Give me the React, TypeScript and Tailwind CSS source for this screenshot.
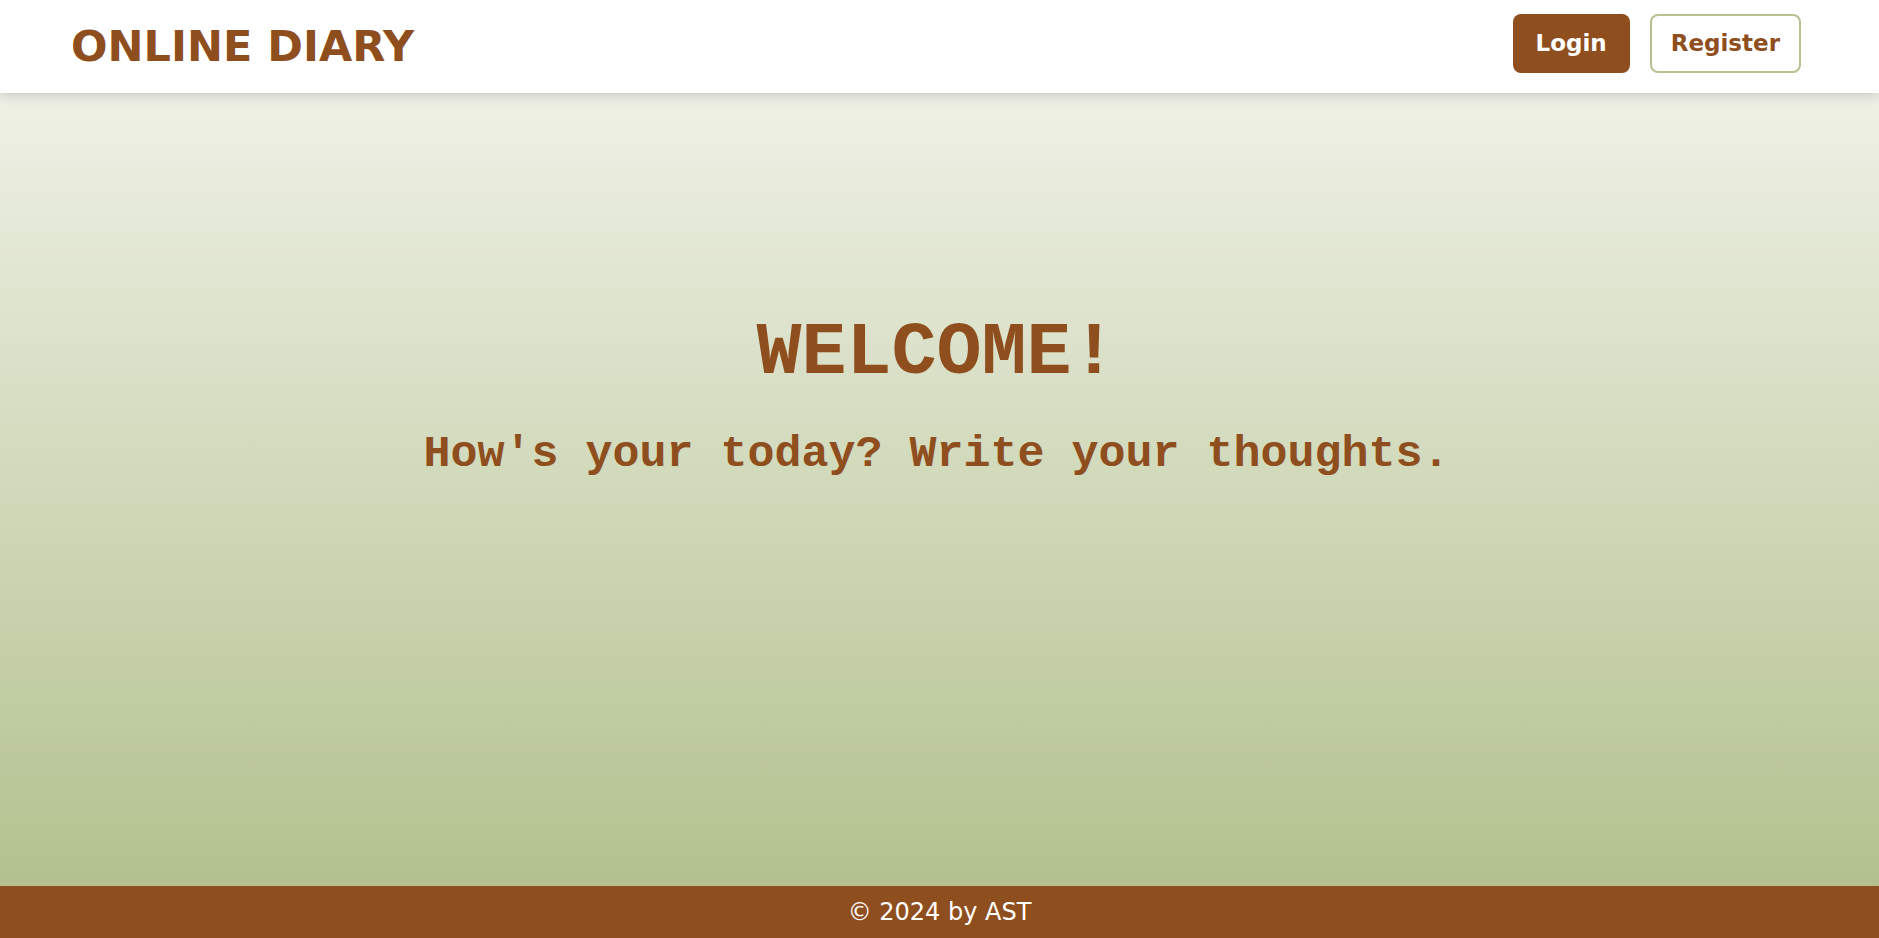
import React from "react";

export default function App() {
  return (
    <div className="flex h-[938px] flex-col overflow-hidden">
      <header className="relative z-10 flex h-[93px] shrink-0 justify-between bg-white pl-[71px] pr-[78px] shadow-[0_2px_12px_rgba(0,0,0,0.18)]">
        <div className="mt-[25px] font-['DejaVu_Sans',sans-serif] text-[43px] font-bold leading-[43px] text-[#8f4e1e]">
          ONLINE DIARY
        </div>
        <nav className="mt-[14px] flex items-start gap-[20px] font-['DejaVu_Sans',sans-serif] text-[23px] font-bold">
          <button className="h-[59px] rounded-[8px] bg-[#8f4e1e] px-[23px] leading-[35px] text-white">
            Login
          </button>
          <button className="h-[59px] rounded-[8px] border-2 border-[#b5c190] bg-white px-[19px] leading-[35px] text-[#8f4e1e]">
            Register
          </button>
        </nav>
      </header>
      <main className="flex flex-1 flex-col items-center bg-gradient-to-b from-[#eff1e6] to-[#b3c18e] pr-[6px] pt-[219px] font-['Liberation_Mono',monospace] font-bold text-[#8f4e1e]">
        <h1 className="text-[75px] leading-[84px]">WELCOME!</h1>
        <p className="mt-[33px] text-[45px] leading-[51px]">
          How's your today? Write your thoughts.
        </p>
      </main>
      <footer className="flex h-[52px] shrink-0 items-center justify-center bg-[#8f4e1e] font-['DejaVu_Sans',sans-serif] text-[24px] text-white">
        © 2024 by AST
      </footer>
    </div>
  );
}
